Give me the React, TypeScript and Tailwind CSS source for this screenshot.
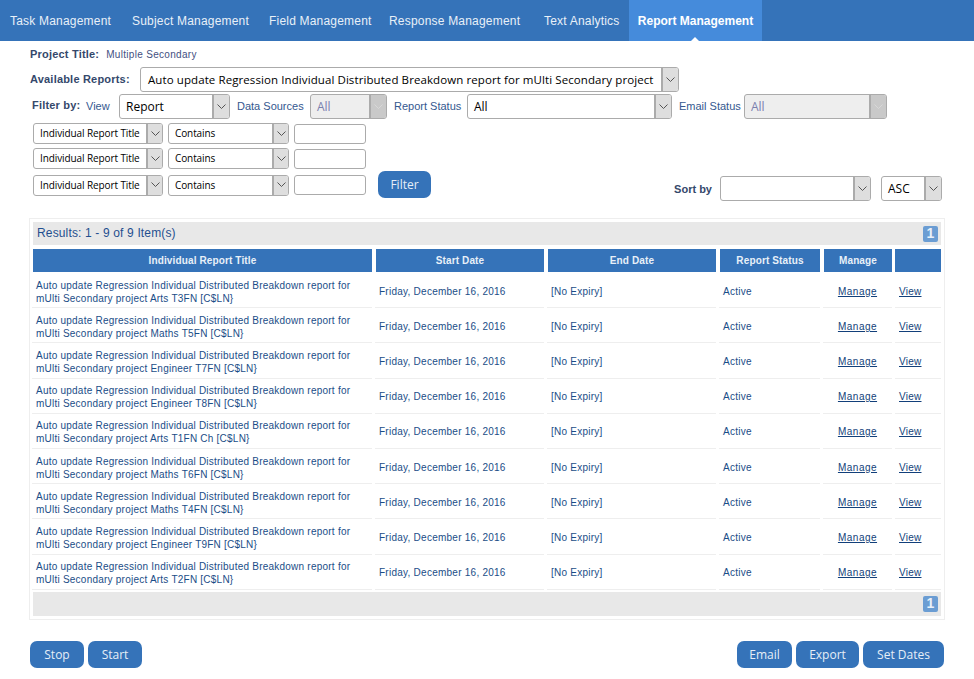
import { ReactNode } from 'react';

const reports = [
  'Arts T3FN [C$LN}',
  'Maths T5FN [C$LN}',
  'Engineer T7FN [C$LN}',
  'Engineer T8FN [C$LN}',
  'Arts T1FN Ch [C$LN}',
  'Maths T6FN [C$LN}',
  'Maths T4FN [C$LN}',
  'Engineer T9FN [C$LN}',
  'Arts T2FN [C$LN}',
];

const tabs = ['Task Management', 'Subject Management', 'Field Management', 'Response Management', 'Text Analytics'];

const tabWidths = ['w-[122px]', 'w-[137px]', 'w-[120px]', 'w-[155px]', 'w-[95px]'];

const gridCols = 'grid grid-cols-[340px_169px_169px_101px_69px_46px] gap-x-[3px]';

function Chevron({ muted }: { muted?: boolean }) {
  return (
    <svg width="9" height="6" viewBox="0 0 9 6" fill="none" stroke={muted ? '#d8d8d8' : '#555'} strokeWidth="1">
      <polyline points="0.5,0.5 4.5,4.5 8.5,0.5" />
    </svg>
  );
}

function SelectBox({
  text,
  className,
  textClass,
  arrowClass,
  disabled,
}: {
  text?: string;
  className: string;
  textClass?: string;
  arrowClass?: string;
  disabled?: boolean;
}) {
  return (
    <div
      className={`flex shrink-0 items-stretch overflow-hidden rounded-[3px] border border-[#ababab] ${
        disabled ? 'bg-[#eeeeee]' : 'bg-white'
      } ${className}`}
    >
      <div
        className={`flex-1 overflow-hidden whitespace-nowrap font-['Open_Sans',sans-serif] ${
          disabled ? 'text-[#7a7fae]' : 'text-black'
        } ${textClass ?? 'pl-[6px] text-[12px]'}`}
      >
        <span className="flex h-full items-center">{text}</span>
      </div>
      <div
        className={`flex items-center justify-center border-l-2 border-[#ababab] ${
          disabled ? 'bg-[#c9c9c9]' : 'bg-[#dedede]'
        } ${arrowClass ?? 'w-[16px]'}`}
      >
        <Chevron muted={disabled} />
      </div>
    </div>
  );
}

function FilterRow({ children, className }: { children?: ReactNode; className: string }) {
  return (
    <div className={`flex items-center ${className}`}>
      <SelectBox
        text="Individual Report Title"
        className="h-[21px] w-[130px]"
        textClass="pl-[6px] text-[10px] tracking-[-0.1px]"
      />
      <SelectBox
        text="Contains"
        className="ml-[5px] h-[21px] w-[121px]"
        textClass="pl-[6px] text-[10px] tracking-[-0.1px]"
      />
      <div className="ml-[5px] h-[20px] w-[72px] rounded-[3px] border border-[#ababab] bg-white" />
      {children}
    </div>
  );
}

function ActionButton({ label, className }: { label: string; className: string }) {
  return (
    <button
      className={`h-[27px] rounded-[7px] bg-[#3573b9] font-['Open_Sans',sans-serif] text-[12px] text-[#e6eef7] ${className}`}
    >
      {label}
    </button>
  );
}

function GreyBar({ children, className }: { children?: ReactNode; className: string }) {
  return <div className={`mx-[1px] flex items-center justify-between bg-[#e8e8e8] ${className}`}>{children}</div>;
}

function Pager() {
  return (
    <div className="ml-auto flex h-[16px] w-[15px] items-center justify-center rounded-[2px] bg-[#6b9dd3] text-[14px] font-bold text-[#eaf1f9]">
      1
    </div>
  );
}

export default function App() {
  return (
    <div className="h-[679px] w-[974px] overflow-hidden bg-white font-['Liberation_Sans',sans-serif]">
      {/* top nav */}
      <div className="flex h-[41px] bg-[#3573b9] text-[12px] tracking-[0.2px] text-[#e8f0f8]">
        {tabs.map((t, i) => (
          <div key={t} className={`flex items-center pl-[10px] ${tabWidths[i]}`}>
            {t}
          </div>
        ))}
        <div className="relative flex w-[133px] items-center justify-center bg-[#458bdb] font-bold tracking-normal text-white">
          Report Management
          <div className="absolute bottom-0 left-[62px] h-0 w-0 border-x-[4px] border-b-[4px] border-x-transparent border-b-white" />
        </div>
      </div>

      <div className="px-[30px]">
        <div className="mt-[7px] flex h-[13px] items-center text-[#34486b]">
          <span className="text-[11px] font-bold tracking-[0.2px]">Project Title:</span>
          <span className="ml-[7px] text-[10px] tracking-[0.3px] text-[#44507f]">Multiple Secondary</span>
        </div>

        <div className="mt-[6px] flex items-center">
          <span className="w-[110px] text-[11px] font-bold tracking-[0.2px] text-[#34486b]">Available Reports:</span>
          <SelectBox
            text="Auto update Regression Individual Distributed Breakdown report for mUlti Secondary project"
            className="h-[25px] w-[539px]"
            textClass="pl-[7px] text-[11.5px] tracking-[0.09px]"
            arrowClass="w-[17px]"
          />
        </div>

        <div className="mt-[2px] flex h-[25px] items-center text-[11px] text-[#34588f]">
          <span className="ml-[2px] mb-[3px] w-[54px] font-bold tracking-[0.2px] text-[#34486b]">Filter by:</span>
          <span className="w-[33px]">View</span>
          <SelectBox text="Report" className="h-[25px] w-[111px]" arrowClass="w-[17px]" />
          <span className="w-[80px] pl-[7px] whitespace-nowrap">Data Sources</span>
          <SelectBox text="All" disabled className="h-[25px] w-[77px]" arrowClass="w-[17px]" />
          <span className="w-[80px] pl-[7px] whitespace-nowrap">Report Status</span>
          <SelectBox text="All" className="h-[25px] w-[205px]" arrowClass="w-[17px]" />
          <span className="w-[72px] pl-[7px] whitespace-nowrap">Email Status</span>
          <SelectBox text="All" disabled className="h-[25px] w-[143px]" arrowClass="w-[17px]" />
        </div>

        <div className="ml-[3px] mr-[2px]">
          <FilterRow className="mt-[4px]" />
          <FilterRow className="mt-[4px]" />
          <div className="flex items-end justify-between">
            <FilterRow className="mt-[2px]">
              <ActionButton label="Filter" className="mb-[1px] ml-[12px] w-[53px]" />
            </FilterRow>
            <div className="mb-[-2px] flex items-center">
              <span className="mr-[8px] mt-[1px] text-[11px] font-bold text-[#34486b]">Sort by</span>
              <SelectBox className="h-[25px] w-[151px]" arrowClass="w-[17px]" />
              <SelectBox text="ASC" className="ml-[10px] h-[25px] w-[61px]" arrowClass="w-[17px]" />
            </div>
          </div>
        </div>

        {/* results panel */}
        <div className="ml-[-1px] mt-[19px] h-[402px] w-[916px] border border-[#eeeeee] px-[2px] pt-[3px]">
          <GreyBar className="h-[23px] pl-[4px] pr-[3px]">
            <span className="mb-[2px] text-[12px] tracking-[0.15px] text-[#1f4f8f]">Results: 1 - 9 of 9 Item(s)</span>
            <Pager />
          </GreyBar>

          <div className={`${gridCols} mt-[4px] h-[23px] text-[10px] font-bold tracking-[0.13px] text-[#e8f0f8]`}>
            {['Individual Report Title', 'Start Date', 'End Date', 'Report Status', 'Manage', ''].map((h, i) => (
              <div key={i} className={`flex items-center justify-center bg-[#3573b9] ${i < 5 ? 'ml-px' : ''}`}>
                {h}
              </div>
            ))}
          </div>

          <div className="mt-[1px]">
            {reports.map((r) => (
              <div key={r} className={`${gridCols} h-[35.2px] text-[10px] tracking-[0.25px] text-[#1a4d87]`}>
                <div className="flex items-center whitespace-nowrap border-b border-[#eeeeee] pl-[4px] pt-[3px] leading-[13px] tracking-[0.23px]">
                  <div>
                    Auto update Regression Individual Distributed Breakdown report for
                    <br />
                    mUlti Secondary project {r}
                  </div>
                </div>
                <div className="flex items-center border-b border-[#eeeeee] pl-[4px] pt-[2px]">
                  Friday, December 16, 2016
                </div>
                <div className="flex items-center border-b border-[#eeeeee] pl-[4px] pt-[2px]">[No Expiry]</div>
                <div className="flex items-center border-b border-[#eeeeee] pl-[4px] pt-[2px]">Active</div>
                <div className="flex items-center justify-center border-b border-[#eeeeee] pt-[2px]">
                  <a className="tracking-[0.5px] text-[#123f7a] underline">Manage</a>
                </div>
                <div className="flex items-center border-b border-[#eeeeee] pl-[4px] pt-[2px]">
                  <a className="text-[#123f7a] underline">View</a>
                </div>
              </div>
            ))}
          </div>

          <GreyBar className="mt-[2px] h-[24px] pr-[3px]">
            <Pager />
          </GreyBar>
        </div>

        {/* bottom actions */}
        <div className="mt-[21px] flex">
          <ActionButton label="Stop" className="w-[54px]" />
          <ActionButton label="Start" className="ml-[4px] w-[54px]" />
          <ActionButton label="Email" className="ml-auto w-[55px]" />
          <ActionButton label="Export" className="ml-[4px] w-[63px]" />
          <ActionButton label="Set Dates" className="ml-[4px] w-[81px]" />
        </div>
      </div>
    </div>
  );
}
